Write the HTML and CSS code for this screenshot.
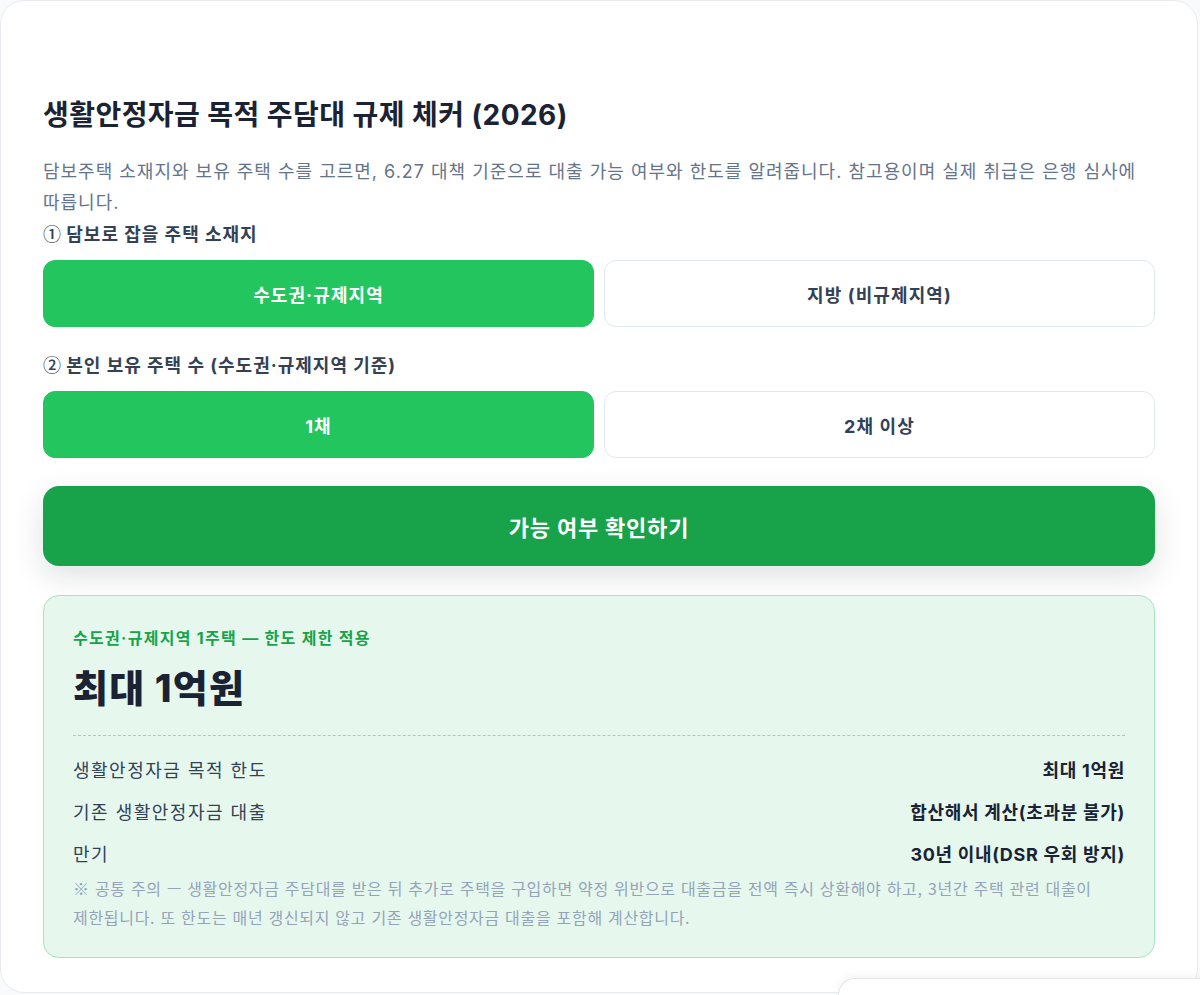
FILE: index.html
```html
<!DOCTYPE html>
<html lang="ko">
<head>
<meta charset="utf-8">
<title>생활안정자금 목적 주담대 규제 체커 (2026)</title>
<link rel="stylesheet" href="styles.css">
</head>
<body>
<main class="card">
  <h1 class="title">생활안정자금 목적 주담대 규제 체커 (2026)</h1>
  <p class="desc">담보주택 소재지와 보유 주택 수를 고르면, 6.27 대책 기준으로 대출 가능 여부와 한도를 알려줍니다. 참고용이며 실제 취급은 은행 심사에 따릅니다.</p>

  <div class="label"><span class="num">①</span> 담보로 잡을 주택 소재지</div>
  <div class="choices">
    <button class="choice active">수도권·규제지역</button>
    <button class="choice">지방 (비규제지역)</button>
  </div>

  <div class="label label-2"><span class="num">②</span> 본인 보유 주택 수 (수도권·규제지역 기준)</div>
  <div class="choices">
    <button class="choice active">1채</button>
    <button class="choice">2채 이상</button>
  </div>

  <button class="submit">가능 여부 확인하기</button>

  <section class="result">
    <div class="result-tag">수도권·규제지역 1주택 — 한도 제한 적용</div>
    <div class="result-big">최대 1억원</div>
    <div class="rows">
      <div class="row"><span class="k">생활안정자금 목적 한도</span><span class="v">최대 1억원</span></div>
      <div class="row"><span class="k">기존 생활안정자금 대출</span><span class="v">합산해서 계산(초과분 불가)</span></div>
      <div class="row"><span class="k">만기</span><span class="v">30년 이내(DSR 우회 방지)</span></div>
    </div>
    <p class="note">※ 공통 주의 — 생활안정자금 주담대를 받은 뒤 추가로 주택을 구입하면 약정 위반으로 대출금을 전액 즉시 상환해야 하고, 3년간 주택 관련 대출이 제한됩니다. 또 한도는 매년 갱신되지 않고 기존 생활안정자금 대출을 포함해 계산합니다.</p>
  </section>
</main>
<div class="dock"></div>
</body>
</html>
```

FILE: styles.css
```css
* { box-sizing: border-box; }

html, body {
  margin: 0;
  padding: 0;
  background: #f8fafc;
  height: 995px;
  overflow: hidden;
}

body {
  font-family: Inter, "Noto Sans CJK KR", "Noto Sans", sans-serif;
  color: #1e293b;
  position: relative;
  word-break: keep-all;
}

.card {
  width: 1198px;
  height: 993px;
  background: #ffffff;
  border: 1px solid #e8ecf1;
  border-radius: 24px;
  padding: 96px 42px 0 42px;
}

.title {
  margin: 0;
  font-size: 28px;
  line-height: 36px;
  font-weight: 700;
  color: #1a2233;
  letter-spacing: 0.45px;
}

.desc {
  margin: 23px 0 0 0;
  font-size: 18px;
  line-height: 31px;
  color: #64748b;
  letter-spacing: 1px;
}

.label {
  margin-top: 2px;
  font-size: 18px;
  line-height: 26px;
  font-weight: 700;
  color: #334155;
  letter-spacing: 1px;
}

.num {
  font-family: "Noto Sans CJK KR", sans-serif;
  font-weight: 500;
  letter-spacing: 0;
}

.label-2 {
  margin-top: 24px;
}

.choices {
  display: grid;
  grid-template-columns: 1fr 1fr;
  gap: 10px;
  margin-top: 12px;
}

.choice {
  height: 67px;
  border-radius: 12px;
  border: 1px solid #e2e8f0;
  background: #ffffff;
  color: #334155;
  font-family: inherit;
  font-size: 18px;
  font-weight: 700;
  letter-spacing: 1.1px;
  cursor: pointer;
}

.choice.active {
  background: #22c55e;
  border-color: #22c55e;
  color: #ffffff;
}

.submit {
  display: block;
  width: 100%;
  height: 80px;
  margin-top: 28px;
  border: none;
  border-radius: 16px;
  background: #18a34a;
  color: #ffffff;
  font-family: inherit;
  font-size: 22px;
  font-weight: 700;
  letter-spacing: 0.8px;
  box-shadow: 0 10px 30px rgba(15, 23, 42, 0.13);
  cursor: pointer;
}

.result {
  margin-top: 29px;
  background: #e6f8ee;
  border: 1px solid #a9e2bf;
  border-radius: 16px;
  padding: 31px 29px 25px 29px;
}

.result-tag {
  font-size: 16px;
  line-height: 22px;
  font-weight: 700;
  color: #16a34a;
  letter-spacing: 1.3px;
}

.result-big {
  margin-top: 16px;
  font-size: 38px;
  line-height: 46px;
  font-weight: 800;
  color: #1a2233;
  letter-spacing: 1.2px;
  padding-bottom: 24px;
  border-bottom: 1px dashed #97d5b8;
}

.rows {
  padding-top: 14px;
}

.row {
  display: flex;
  justify-content: space-between;
  align-items: center;
  padding: 8px 0;
  font-size: 18px;
  line-height: 26px;
}

.row .k {
  color: #334155;
  letter-spacing: 1.5px;
}

.row .v {
  color: #1a2233;
  font-weight: 700;
  letter-spacing: 0.7px;
}

.note {
  margin: -2px 0 0 0;
  font-family: "Noto Sans CJK KR", Inter, sans-serif;
  font-size: 16px;
  line-height: 29px;
  color: #94a3b8;
  letter-spacing: 0.7px;
}

.dock {
  position: absolute;
  left: 838px;
  top: 978px;
  width: 362px;
  height: 17px;
  background: #ffffff;
  border: 1px solid #e5e7eb;
  border-right: none;
  border-bottom: none;
  border-top-left-radius: 17px;
  box-shadow: 0 -2px 10px rgba(15, 23, 42, 0.05);
}
```
